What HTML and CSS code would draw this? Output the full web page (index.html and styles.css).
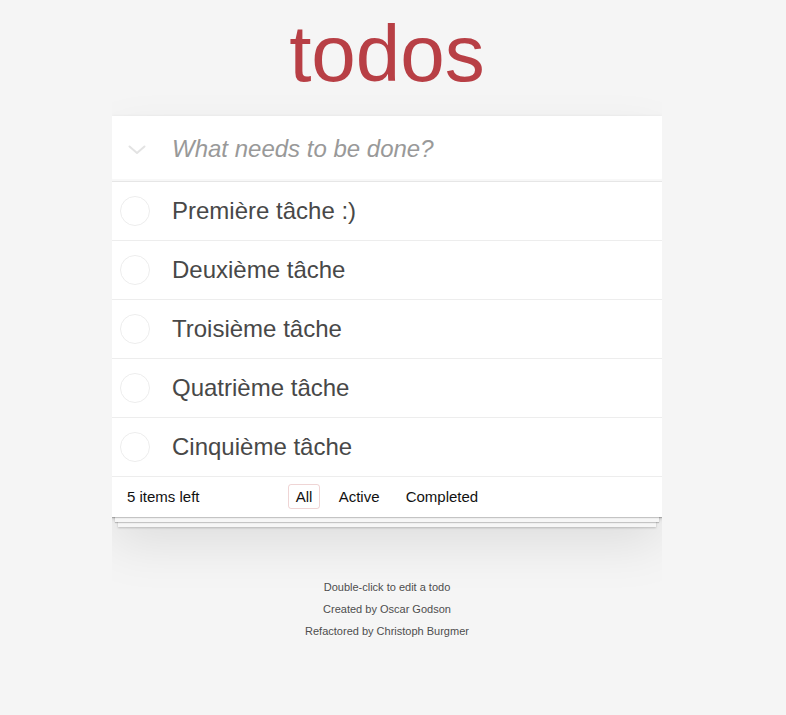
FILE: index.html
```html
<!DOCTYPE html>
<html lang="fr">
<head>
<meta charset="utf-8">
<title>TodoMVC</title>
<link rel="stylesheet" href="styles.css">
</head>
<body>
<section class="todoapp">
  <header class="header">
    <h1 class="title">todos</h1>
    <div class="new-row">
      <span class="toggle-all">
        <svg width="18" height="10" viewBox="0 0 18 10"><polyline points="1.5,1.5 9,8 16.5,1.5" fill="none" stroke="#e3e3e3" stroke-width="2" stroke-linejoin="round" stroke-linecap="round"/></svg>
      </span>
      <input class="new-todo" placeholder="What needs to be done?">
    </div>
  </header>
  <section class="main">
    <ul class="todo-list">
      <li class="todo"><svg class="toggle" width="30" height="30" viewBox="0 0 30 30"><circle cx="15" cy="15" r="14.5" fill="none" stroke="#ededed" stroke-width="1"/></svg><label class="todo-label">Première tâche :)</label></li>
      <li class="todo"><svg class="toggle" width="30" height="30" viewBox="0 0 30 30"><circle cx="15" cy="15" r="14.5" fill="none" stroke="#ededed" stroke-width="1"/></svg><label class="todo-label">Deuxième tâche</label></li>
      <li class="todo"><svg class="toggle" width="30" height="30" viewBox="0 0 30 30"><circle cx="15" cy="15" r="14.5" fill="none" stroke="#ededed" stroke-width="1"/></svg><label class="todo-label">Troisième tâche</label></li>
      <li class="todo"><svg class="toggle" width="30" height="30" viewBox="0 0 30 30"><circle cx="15" cy="15" r="14.5" fill="none" stroke="#ededed" stroke-width="1"/></svg><label class="todo-label">Quatrième tâche</label></li>
      <li class="todo"><svg class="toggle" width="30" height="30" viewBox="0 0 30 30"><circle cx="15" cy="15" r="14.5" fill="none" stroke="#ededed" stroke-width="1"/></svg><label class="todo-label">Cinquième tâche</label></li>
    </ul>
  </section>
  <footer class="footer">
    <span class="todo-count">5 items left</span>
    <ul class="filters">
      <li><a class="filter selected" href="#/">All</a></li>
      <li><a class="filter" href="#/active">Active</a></li>
      <li><a class="filter" href="#/completed">Completed</a></li>
    </ul>
    <span class="spacer"></span>
  </footer>
</section>
<footer class="info">
  <p>Double-click to edit a todo</p>
  <p>Created by Oscar Godson</p>
  <p>Refactored by Christoph Burgmer</p>
</footer>
</body>
</html>
```
FILE: styles.css
```css
html {
  margin: 0;
  padding: 0 12px 0 0;
  background: #f5f5f5;
}
body {
  margin: 0 auto;
  max-width: 550px;
  min-width: 230px;
  font: 14px "Liberation Sans", Arial, Helvetica, sans-serif;
  line-height: 1.4em;
  color: #111111;
}
.todoapp {
  background: #fff;
  margin: 116px 0 0 0;
  box-shadow: 0 2px 4px 0 rgba(0,0,0,0.2), 0 25px 50px 0 rgba(0,0,0,0.1);
  display: flex;
  flex-direction: column;
}
.header {
  display: block;
}
.title {
  margin: -108px 0 16px 0;
  font-size: 80px;
  line-height: 92px;
  font-weight: 400;
  text-align: center;
  color: #b83f45;
  height: 92px;
}
.new-row {
  display: flex;
  align-items: center;
  height: 65px;
  box-shadow: inset 0 -2px 1px rgba(0,0,0,0.03);
}
.toggle-all {
  width: 60px;
  height: 65px;
  display: flex;
  align-items: center;
  justify-content: flex-start;
  padding-left: 16px;
  box-sizing: border-box;
}
.toggle-all svg {
  display: block;
  margin-top: 3px;
}
.new-todo {
  flex: 1;
  min-width: 0;
  border: none;
  outline: none;
  background: transparent;
  font: 24px "Liberation Sans", Arial, sans-serif;
  line-height: 1.4em;
  padding: 0 16px 0 0;
  color: #4d4d4d;
  height: 65px;
}
.new-todo::placeholder {
  font-style: italic;
  color: #999999;
}
.main {
  border-top: 1px solid #e6e6e6;
}
.todo-list {
  margin: 0;
  padding: 0;
  list-style: none;
}
.todo {
  display: flex;
  align-items: center;
  border-bottom: 1px solid #ededed;
  font-size: 24px;
}
.toggle {
  display: block;
  margin-left: 8px;
  flex: none;
}
.todo-label {
  display: block;
  padding: 15px 15px 15px 22px;
  line-height: 28px;
  color: #484848;
  font-weight: 400;
}
.footer {
  display: grid;
  grid-template-columns: 1fr auto 1fr;
  align-items: center;
  padding: 10px 15px;
  height: 20px;
  font-size: 15px;
  background: #fff;
  color: #111111;
  box-shadow: 0 1px 1px rgba(0,0,0,0.2), 0 8px 0 -3px #f6f6f6, 0 9px 1px -3px rgba(0,0,0,0.2), 0 16px 0 -6px #f6f6f6, 0 17px 2px -6px rgba(0,0,0,0.2);
}
.todo-count {
  text-align: left;
}
.filters {
  margin: 0;
  padding: 0;
  list-style: none;
}
.filters li {
  display: inline;
}
.filter {
  color: inherit;
  margin: 3px;
  padding: 3px 7px;
  text-decoration: none;
  border: 1px solid transparent;
  border-radius: 3px;
}
.filter.selected {
  border-color: rgba(175,47,47,0.2);
}
.info {
  margin: 65px auto 0;
  color: #4d4d4d;
  font-size: 11px;
  text-shadow: 0 1px 0 rgba(255,255,255,0.5);
  text-align: center;
}
.info p {
  line-height: 1;
  margin: 11px 0;
}
```
